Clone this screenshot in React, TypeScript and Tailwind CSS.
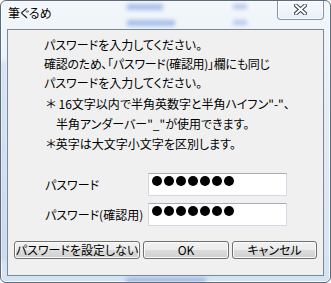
import React from "react";

const font = "font-['Noto_Sans_CJK_JP','Noto_Sans_CJK_SC',sans-serif] [font-feature-settings:'palt']";

const Dots = () => (
  <div className="flex gap-[2px] pt-[2px] pl-[3px]">
    {Array.from({ length: 7 }).map((_, i) => (
      <span key={i} className="block w-[10px] h-[10px] rounded-full bg-black" />
    ))}
  </div>
);

const PasswordRow = ({ label }: { label: string }) => (
  <div className="flex items-center h-[23px]">
    <span className="w-[140px] pl-[37px] whitespace-nowrap text-[12px] leading-[23px]">{label}</span>
    <div className="w-[139px] h-[23px] bg-white border border-[#d3d9e2] border-t-[#abadb3]">
      <Dots />
    </div>
  </div>
);

const WinButton = ({ label, w }: { label: string; w: string }) => (
  <button
    className={`${w} h-[18px] rounded-[3px] border border-[#707070] bg-[linear-gradient(180deg,#f2f2f2_0%,#ebebeb_50%,#dddddd_50%,#cfcfcf_100%)] shadow-[inset_0_0_0_1px_#fbfbfb] text-[12px] leading-[16px] text-black whitespace-nowrap`}
  >
    {label}
  </button>
);

export default function App() {
  return (
    <div className={`w-[331px] h-[283px] ${font} text-black`}>
      <div className="relative w-full h-full rounded-[6px] border border-[#5f6b78] bg-[linear-gradient(180deg,#f3f7fb_0%,#e3edf7_40%,#d4e3f1_100%)] shadow-[inset_0_0_0_1px_#f7fbff] flex flex-col overflow-hidden">
        {/* blurred window content behind the glass */}
        <span className="absolute left-[126px] top-[3px] w-[36px] h-[6px] bg-[#5a86d8] opacity-50 blur-[2px]" />
        <span className="absolute left-[126px] top-[19px] w-[48px] h-[6px] bg-[#5a86d8] opacity-50 blur-[2px]" />
        <span className="absolute left-[232px] top-[3px] w-[14px] h-[5px] bg-[#5a86d8] opacity-40 blur-[2px]" />
        <span className="absolute left-[232px] top-[19px] w-[14px] h-[5px] bg-[#5a86d8] opacity-40 blur-[2px]" />
        <span className="absolute left-[0px] top-[60px] w-[4px] h-[200px] bg-[#a9c4e6] opacity-50 blur-[2px]" />
        <span className="absolute left-[125px] top-[277px] w-[80px] h-[4px] bg-[#4f7fd8] opacity-50 blur-[2px]" />

        {/* title bar */}
        <div className="relative h-[28px] flex items-start">
          <span className="pl-[7px] pt-[3px] text-[12px] leading-[18px] [text-shadow:0_0_6px_#ffffff,0_0_3px_#ffffff]">筆ぐるめ</span>
          <div className="absolute right-[6px] top-[-1px] w-[47px] h-[20px] rounded-b-[4px] border border-[#8794a3] border-t-0 bg-[linear-gradient(180deg,rgba(255,255,255,0.5),rgba(220,232,245,0.5))] shadow-[inset_0_0_0_1px_rgba(255,255,255,0.7)] flex items-center justify-center">
            <svg width="13" height="11" viewBox="0 0 13 11">
              <path d="M2 1.5 L11 9.5 M11 1.5 L2 9.5" stroke="#3b4450" strokeWidth="4" strokeLinecap="square" />
              <path d="M2 1.5 L11 9.5 M11 1.5 L2 9.5" stroke="#ffffff" strokeWidth="2" strokeLinecap="square" />
            </svg>
          </div>
        </div>

        {/* client area */}
        <div className="relative mx-[6px] h-[247px] border border-[#7d8896] bg-[#f0f0f0] flex flex-col">
          <div className="pl-[36px] pt-[5px] text-[12px]">
            <p className="leading-[19px]">パスワードを入力してください。</p>
            <p className="leading-[19px] tracking-[-0.3px]">確認のため、「パスワード(確認用)」欄にも同じ</p>
            <p className="leading-[19px]">パスワードを入力してください。</p>
            <div className="mt-[2px] pl-[2px]">
              <p className="leading-[20px]">＊ 16文字以内で半角英数字と半角ハイフン"-"、</p>
              <p className="leading-[20px] pl-[10px]">半角アンダーバー"_"が使用できます。</p>
              <p className="leading-[20px]">＊英字は大文字小文字を区別します。</p>
            </div>
          </div>

          <div className="mt-[19px] flex flex-col gap-[7px]">
            <PasswordRow label="パスワード" />
            <PasswordRow label="パスワード(確認用)" />
          </div>

          <div className="mt-[15px] pl-[6px] flex gap-[3px]">
            <WinButton label="パスワードを設定しない" w="w-[126px]" />
            <WinButton label="OK" w="w-[86px]" />
            <WinButton label="キャンセル" w="w-[85px]" />
          </div>
        </div>
      </div>
    </div>
  );
}
